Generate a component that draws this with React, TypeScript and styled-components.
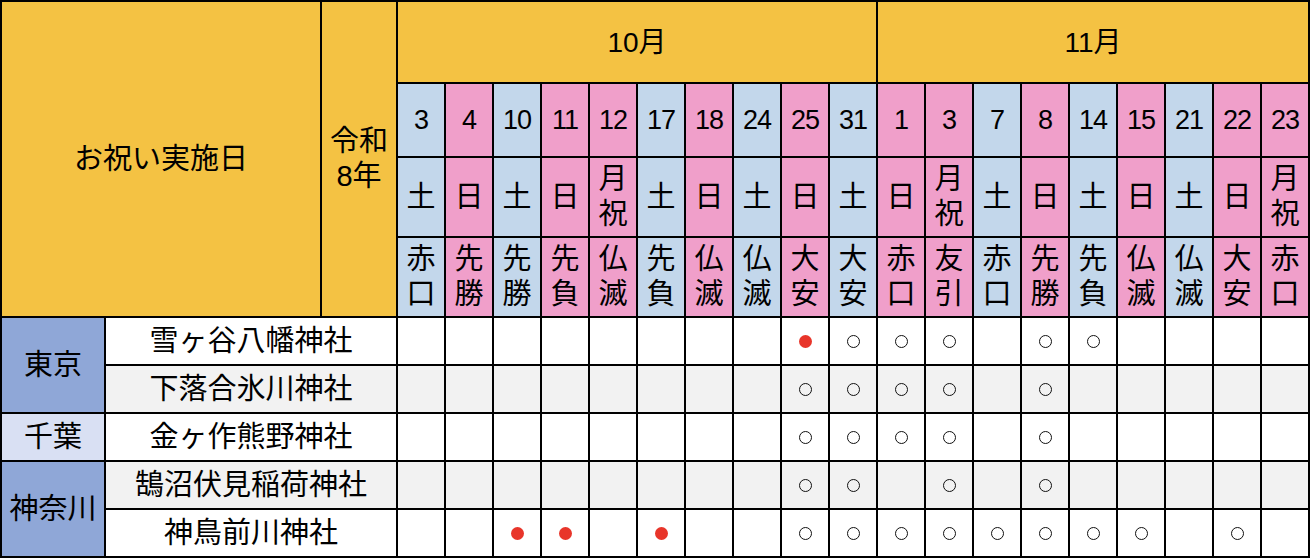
import styled, { createGlobalStyle } from 'styled-components';

const GlobalStyle = createGlobalStyle`
    html, body {
        margin: 0;
        padding: 0;
        background: #ffffff;
    }
    body {
        font-family: "Liberation Sans", "Noto Sans CJK JP", sans-serif;
        color: #000000;
    }
`;

type Tone = 'blue' | 'pink';

interface Day {
    date: string;
    week: string[];
    rokuyo: string[];
    tone: Tone;
}

const days: Day[] = [
    { date: '3', week: ['土'], rokuyo: ['赤', '口'], tone: 'blue' },
    { date: '4', week: ['日'], rokuyo: ['先', '勝'], tone: 'pink' },
    { date: '10', week: ['土'], rokuyo: ['先', '勝'], tone: 'blue' },
    { date: '11', week: ['日'], rokuyo: ['先', '負'], tone: 'pink' },
    { date: '12', week: ['月', '祝'], rokuyo: ['仏', '滅'], tone: 'pink' },
    { date: '17', week: ['土'], rokuyo: ['先', '負'], tone: 'blue' },
    { date: '18', week: ['日'], rokuyo: ['仏', '滅'], tone: 'pink' },
    { date: '24', week: ['土'], rokuyo: ['仏', '滅'], tone: 'blue' },
    { date: '25', week: ['日'], rokuyo: ['大', '安'], tone: 'pink' },
    { date: '31', week: ['土'], rokuyo: ['大', '安'], tone: 'blue' },
    { date: '1', week: ['日'], rokuyo: ['赤', '口'], tone: 'pink' },
    { date: '3', week: ['月', '祝'], rokuyo: ['友', '引'], tone: 'pink' },
    { date: '7', week: ['土'], rokuyo: ['赤', '口'], tone: 'blue' },
    { date: '8', week: ['日'], rokuyo: ['先', '勝'], tone: 'pink' },
    { date: '14', week: ['土'], rokuyo: ['先', '負'], tone: 'blue' },
    { date: '15', week: ['日'], rokuyo: ['仏', '滅'], tone: 'pink' },
    { date: '21', week: ['土'], rokuyo: ['仏', '滅'], tone: 'blue' },
    { date: '22', week: ['日'], rokuyo: ['大', '安'], tone: 'pink' },
    { date: '23', week: ['月', '祝'], rokuyo: ['赤', '口'], tone: 'pink' },
];

// one character per day: "o" = 実施, "x" = 赤丸, "." = なし
const shrines: { region?: { name: string; span: number; light?: boolean }; name: string; marks: string }[] = [
    { region: { name: '東京', span: 2 }, name: '雪ヶ谷八幡神社', marks: '........xooo.oo....' },
    { name: '下落合氷川神社', marks: '........oooo.o.....' },
    { region: { name: '千葉', span: 1, light: true }, name: '金ヶ作熊野神社', marks: '........oooo.o.....' },
    { region: { name: '神奈川', span: 2 }, name: '鵠沼伏見稲荷神社', marks: '........oo.o.o.....' },
    { name: '神鳥前川神社', marks: '..xx.x..oooooooo.o.' },
];

const Table = styled.div`
    display: grid;
    grid-template-columns: 102px 214px 74px repeat(19, 46px);
    grid-template-rows: 80px 72px 78px 78px repeat(5, 46px);
    gap: 2px;
    padding: 2px;
    background: #000000;
    width: max-content;
`;

const Cell = styled.div`
    display: flex;
    align-items: center;
    justify-content: center;
    text-align: center;
    font-size: 29px;
    line-height: 35px;
`;

const TitleCell = styled(Cell)`
    grid-column: 1 / span 2;
    grid-row: 1 / span 4;
    background: #f4c243;
`;

const YearCell = styled(Cell)`
    grid-column: 3;
    grid-row: 1 / span 4;
    background: #f4c243;
    flex-direction: column;
`;

const MonthCell = styled(Cell)<{ $span: number }>`
    grid-column: span ${({ $span }) => $span};
    background: #f4c243;
    font-size: 28px;
`;

const DayCell = styled(Cell)<{ $tone: Tone }>`
    background: ${({ $tone }) => ($tone === 'blue' ? '#c3d7eb' : '#f09fca')};
    flex-direction: column;
`;

const DateNumber = styled.span`
    font-size: 27px;
    letter-spacing: -1px;
`;

const RegionCell = styled(Cell)<{ $span: number; $light?: boolean }>`
    grid-row: span ${({ $span }) => $span};
    background: ${({ $light }) => ($light ? '#d9e0f3' : '#8fa7d7')};
`;

const ShrineCell = styled(Cell)<{ $stripe: boolean }>`
    grid-column: span 2;
    background: ${({ $stripe }) => ($stripe ? '#f2f2f2' : '#ffffff')};
`;

const MarkCell = styled(Cell)<{ $stripe: boolean }>`
    background: ${({ $stripe }) => ($stripe ? '#f2f2f2' : '#ffffff')};
`;

const Dot = styled.span<{ $filled: boolean }>`
    box-sizing: border-box;
    width: 13px;
    height: 13px;
    border-radius: 50%;
    background: ${({ $filled }) => ($filled ? '#e8352a' : 'transparent')};
    border: ${({ $filled }) => ($filled ? 'none' : '1.7px solid #111111')};
`;

const Lines = ({ chars }: { chars: string[] }) => (
    <>
        {chars.map((c, i) => (
            <span key={i}>{c}</span>
        ))}
    </>
);

const App = () => {
    return (
        <>
            <GlobalStyle />
            <Table>
                <TitleCell>お祝い実施日</TitleCell>
                <YearCell>
                    <span>令和</span>
                    <span>8年</span>
                </YearCell>
                <MonthCell $span={10}>10月</MonthCell>
                <MonthCell $span={9}>11月</MonthCell>

                {days.map((d, i) => (
                    <DayCell key={`d${i}`} $tone={d.tone}>
                        <DateNumber>{d.date}</DateNumber>
                    </DayCell>
                ))}
                {days.map((d, i) => (
                    <DayCell key={`w${i}`} $tone={d.tone}>
                        <Lines chars={d.week} />
                    </DayCell>
                ))}
                {days.map((d, i) => (
                    <DayCell key={`r${i}`} $tone={d.tone}>
                        <Lines chars={d.rokuyo} />
                    </DayCell>
                ))}

                {shrines.map((s, row) => {
                    const stripe = row % 2 === 1;
                    return [
                        s.region && (
                            <RegionCell key={`g${row}`} $span={s.region.span} $light={s.region.light}>
                                {s.region.name}
                            </RegionCell>
                        ),
                        <ShrineCell key={`s${row}`} $stripe={stripe}>
                            {s.name}
                        </ShrineCell>,
                        ...days.map((_, i) => (
                            <MarkCell key={`m${row}-${i}`} $stripe={stripe}>
                                {s.marks[i] === 'o' && <Dot $filled={false} />}
                                {s.marks[i] === 'x' && <Dot $filled />}
                            </MarkCell>
                        )),
                    ];
                })}
            </Table>
        </>
    );
};

export default App;
